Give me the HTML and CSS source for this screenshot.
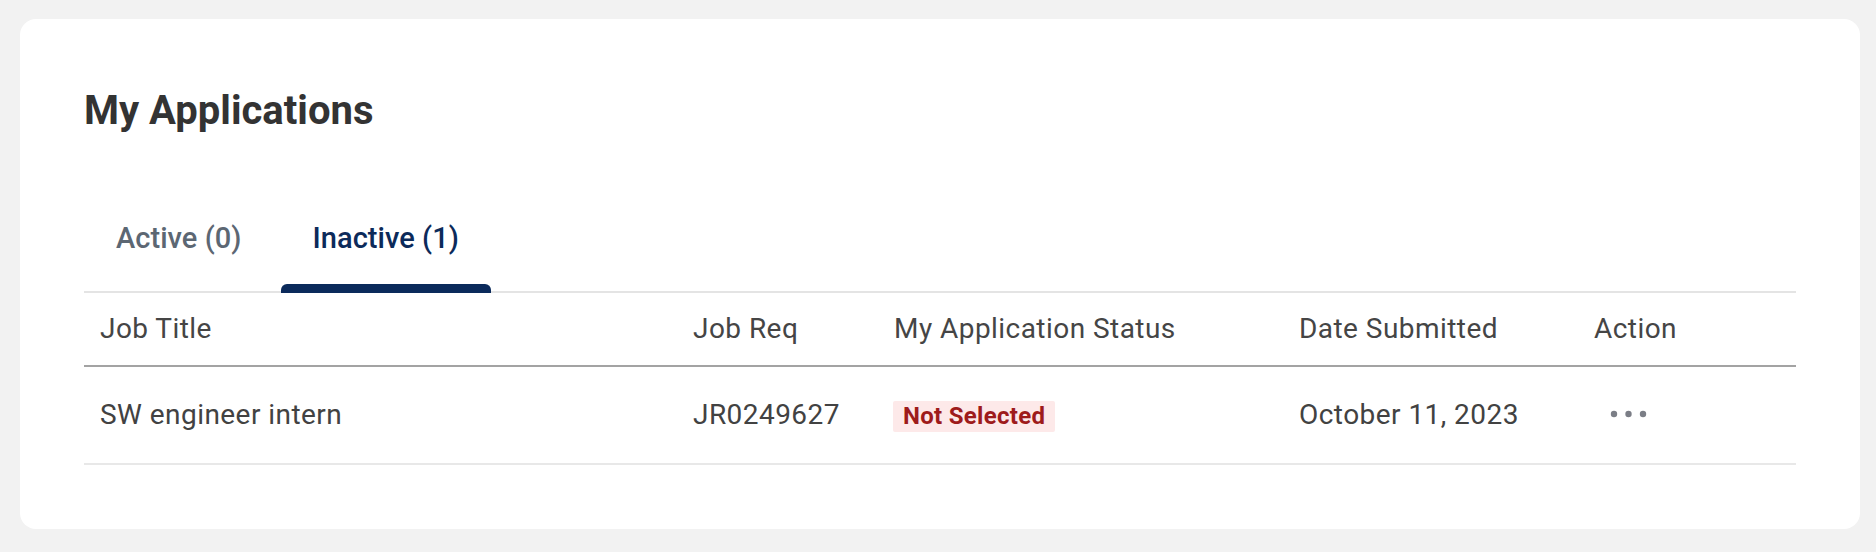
FILE: index.html
```html
<!DOCTYPE html>
<html lang="en">
<head>
<meta charset="utf-8">
<title>My Applications</title>
<link rel="stylesheet" href="styles.css">
</head>
<body>
<section class="card">
  <h1 class="title">My Applications</h1>
  <div class="tabs" role="tablist">
    <button class="tab" role="tab">Active (0)</button>
    <button class="tab tab-active" role="tab">Inactive (1)</button>
  </div>
  <div class="table">
    <div class="row row-head">
      <div class="cell">Job Title</div>
      <div class="cell">Job Req</div>
      <div class="cell">My Application Status</div>
      <div class="cell">Date Submitted</div>
      <div class="cell">Action</div>
    </div>
    <div class="row row-body">
      <div class="cell">SW engineer intern</div>
      <div class="cell">JR0249627</div>
      <div class="cell"><span class="badge">Not Selected</span></div>
      <div class="cell">October 11, 2023</div>
      <div class="cell cell-action">
        <button class="more" aria-label="More actions">
          <svg width="38" height="8" viewBox="0 0 38 8"><circle cx="4" cy="4" r="3.2"/><circle cx="18.5" cy="4" r="3.2"/><circle cx="33" cy="4" r="3.2"/></svg>
        </button>
      </div>
    </div>
  </div>
</section>
</body>
</html>
```

FILE: styles.css
```css
* { box-sizing: border-box; }
html, body { margin: 0; padding: 0; }
body {
  background: #f2f2f2;
  font-family: Roboto, "Liberation Sans", Arial, sans-serif;
  color: #424242;
}
.card {
  margin: 19px 16px 0 20px;
  height: 510px;
  background: #ffffff;
  border-radius: 16px;
  padding: 68px 64px 0 64px;
}
.title {
  margin: 0;
  font-size: 40px;
  line-height: 48px;
  font-weight: 700;
  color: #333333;
}
.tabs {
  display: flex;
  gap: 6px;
  margin-top: 48px;
  border-bottom: 2px solid #e4e4e4;
}
.tab {
  position: relative;
  border: 0;
  background: transparent;
  font-family: inherit;
  font-size: 29px;
  font-weight: 500;
  letter-spacing: 0.05px;
  line-height: 40px;
  padding: 35px 33px 33px 32px;
  color: #5c6773;
  cursor: pointer;
}
.tab-active { color: #0c2a5a; padding-right: 32px; }
.tab-active::after {
  content: "";
  position: absolute;
  left: 0;
  right: 0;
  bottom: -2px;
  height: 9px;
  background: #0b2a5b;
  border-radius: 6px 6px 0 0;
}
.row {
  display: grid;
  grid-template-columns: 593px 201px 405px 295px 1fr;
  align-items: center;
}
.row-head {
  height: 74px;
  border-bottom: 2px solid #a3a3a3;
  color: #454545;
}
.row-body {
  height: 98px;
  border-bottom: 2px solid #e8e8e8;
}
.cell {
  padding-left: 16px;
  font-size: 28px;
  letter-spacing: 0.45px;
  line-height: 36px;
  white-space: nowrap;
}
.cell-action {
  display: flex;
  align-items: center;
}
.badge {
  display: inline-block;
  margin-left: -1px;
  padding: 0 10px;
  height: 31px;
  line-height: 31px;
  font-size: 24px;
  letter-spacing: 0.3px;
  font-weight: 700;
  color: #9e1b1b;
  background: #fde9e9;
  border-radius: 2px;
}
.more {
  display: flex;
  align-items: center;
  border: 0;
  background: transparent;
  padding: 0;
  margin: 0 0 3px 16px;
  cursor: pointer;
}
.more svg { fill: #7b7e86; display: block; }
```
